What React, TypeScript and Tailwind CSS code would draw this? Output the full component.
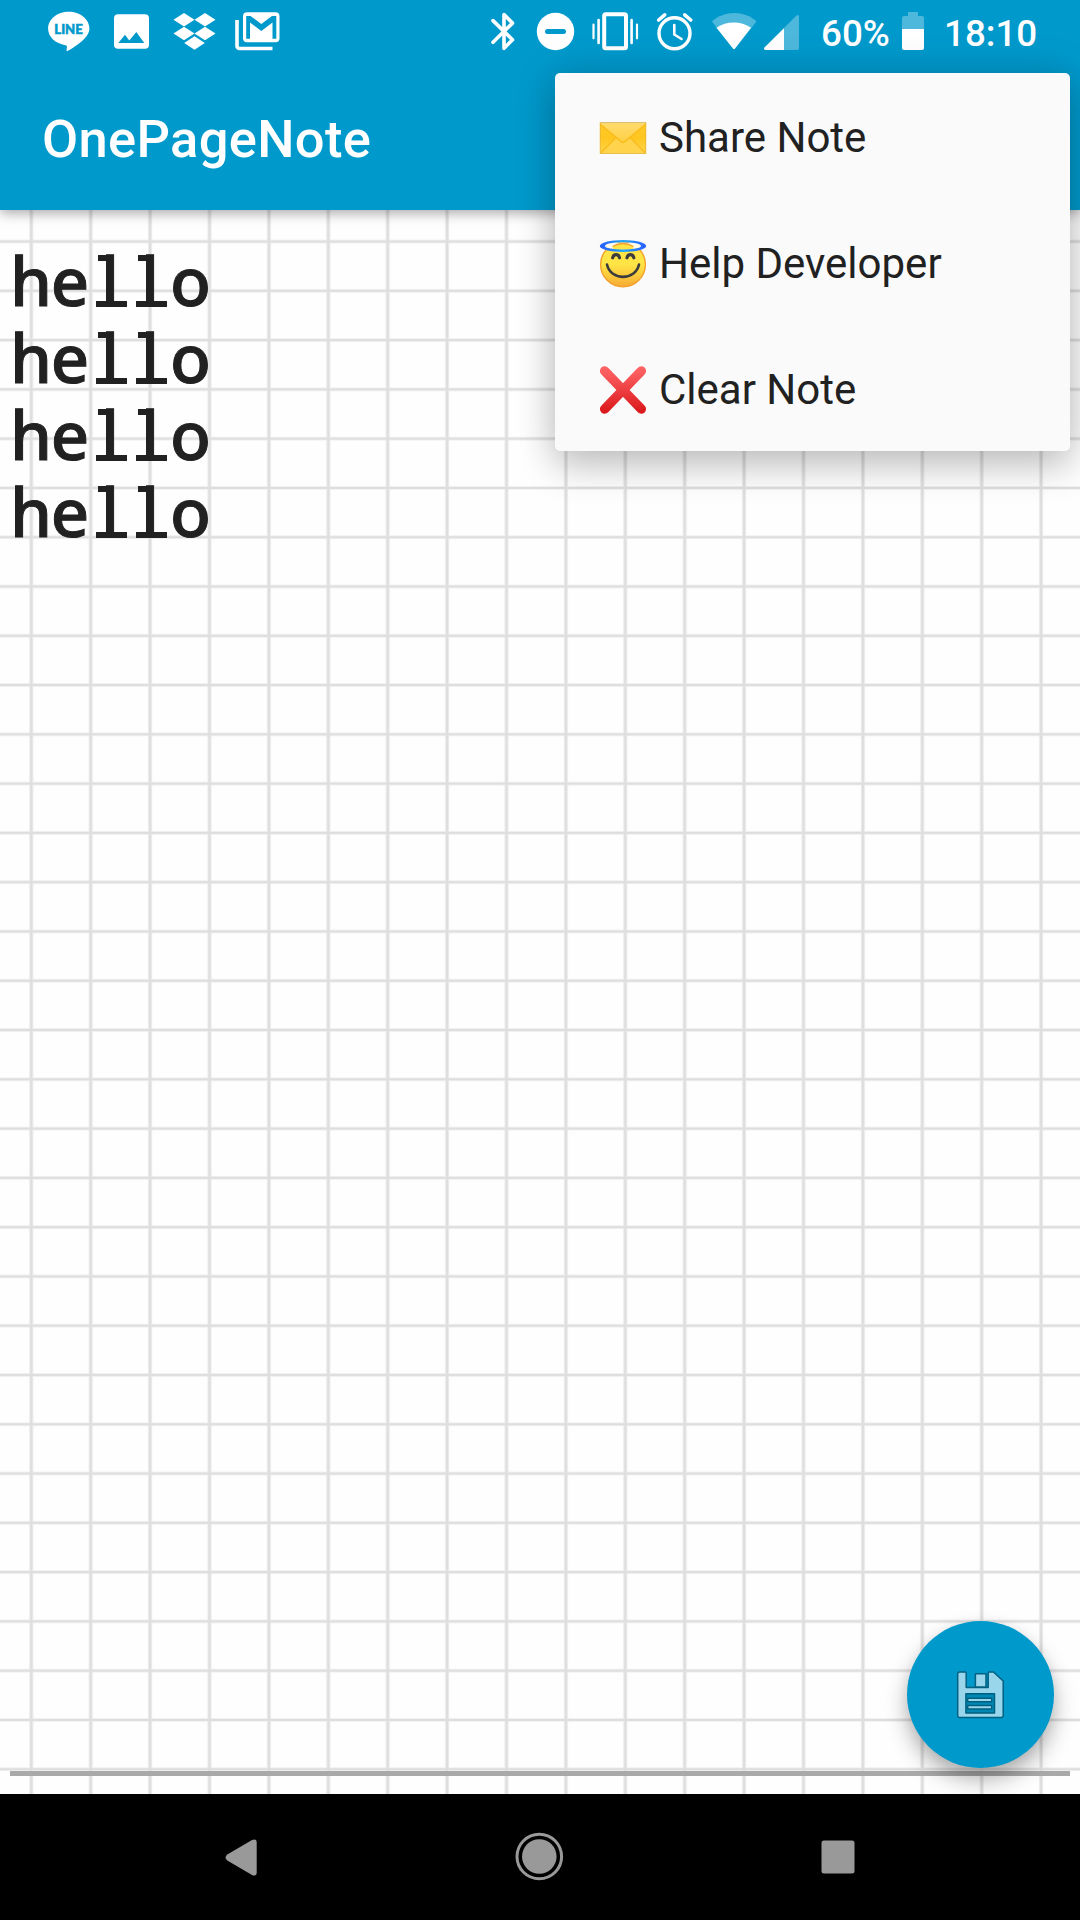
import type { ReactNode } from "react";

const WHITE = "#ffffff";
const FADED = "#4db8dc";

function StatusIcon({ x, w, className, children }: { x: number; w: number; className: string; children: ReactNode }) {
  return (
    <svg viewBox={`${x} 0 ${w} 63`} className={className} fill={WHITE}>
      {children}
    </svg>
  );
}

function NotificationIcons() {
  return (
    <div className="flex h-full pl-11">
      <StatusIcon x={44} w={66} className="h-[63px] w-[66px]">
        <path d="M68.7 11.8c-11.3 0-20.6 7.5-20.6 16.8 0 8.3 7.4 15.200 17.300 16.600 2.300.5 1.400 2.200 1.200 5.500 0 .5.4.7.9.4 3-1.500 12.500-7.400 17.500-13.100 2.900-3 4.400-6 4.400-9.400 0-9.300-9.300-16.800-20.700-16.800z" />
        <text x="54.300" y="33.800" fontSize="12.300" fontWeight="900" fontFamily="Lato, sans-serif" fill="#0099cc" stroke="#0099cc" strokeWidth=".5" textLength="28.500" lengthAdjust="spacingAndGlyphs">
          LINE
        </text>
      </StatusIcon>
      <StatusIcon x={110} w={55} className="h-[63px] w-[55px]">
        <path fillRule="evenodd" d="M118 14.300h27a4 4 0 0 1 4 4v26.400a4 4 0 0 1-4 4h-27a4 4 0 0 1-4-4V18.300a4 4 0 0 1 4-4zM118.300 43h26L136.300 32l-7 8.500-4.300-5.700z" />
      </StatusIcon>
      <StatusIcon x={165} w={60} className="h-[63px] w-[60px]">
        <path d="M184 13l10.500 6.800L184 26.500 173.500 19.800zM205 13l10.500 6.800L205 26.500l-10.500-6.700zM184 26.800l10.500 6.700L184 40.200l-10.500-6.700zM205 26.800l10.500 6.700-10.500 6.700-10.500-6.700zM194.500 36.200l10.300 6.700-10.300 6.800-10.300-6.800z" />
      </StatusIcon>
      <StatusIcon x={225} w={65} className="h-[63px] w-[65px]">
        <path fillRule="evenodd" d="M247 12.300h28.500a4 4 0 0 1 4 4v22a4 4 0 0 1-4 4H247a4 4 0 0 1-4-4v-22a4 4 0 0 1 4-4zM246.200 38.800h3.800V22.600l11.300 8.400 11.200-8.400v16.200h3.800V16h-4.300l-10.700 8-10.800-8h-4.300z" />
        <path d="M237 20v26a2.500 2.500 0 0 0 2.500 2.500H272.500" fill="none" stroke={WHITE} strokeWidth="3.600" />
      </StatusIcon>
    </div>
  );
}

function SystemIcons() {
  return (
    <div className="flex h-full">
      <StatusIcon x={485} w={45} className="h-[63px] w-[45px]">
        <path d="M493 20.600l19.500 19.200-8.500 8.500V14.600l8.500 8.500-19.500 19.200" fill="none" stroke={WHITE} strokeWidth="3.600" strokeLinecap="round" strokeLinejoin="round" />
      </StatusIcon>
      <StatusIcon x={530} w={55} className="h-[63px] w-[55px]">
        <circle cx="555.500" cy="31.500" r="18.700" />
        <path d="M547.500 31.500h16" stroke="#0099cc" strokeWidth="5" strokeLinecap="round" />
      </StatusIcon>
      <StatusIcon x={585} w={65} className="h-[63px] w-[65px]">
        <rect x="604.200" y="14.200" width="21.800" height="34.100" rx="1.500" fill="none" stroke={WHITE} strokeWidth="4" />
        <path d="M598.600 20v23M631.600 20v23" stroke={WHITE} strokeWidth="2.600" strokeLinecap="round" />
        <path d="M593.500 24.700v13.600M637 24.700v13.600" stroke={WHITE} strokeWidth="2.200" strokeLinecap="round" />
      </StatusIcon>
      <StatusIcon x={650} w={55} className="h-[63px] w-[55px]">
        <g fill="none" stroke={WHITE} strokeLinecap="round" strokeLinejoin="round">
          <circle cx="674.500" cy="33.300" r="15.500" strokeWidth="3.400" />
          <path d="M674.300 25v9.500l7.200 4.500" strokeWidth="2.600" />
          <path d="M658.700 20l6-5.200M690.700 20l-6-5.200" strokeWidth="3.600" />
        </g>
      </StatusIcon>
      <StatusIcon x={705} w={57} className="h-[63px] w-[57px]">
        <path d="M712 21.500C724 10 744.500 10 756.500 21.500L734.800 49q-.8.800-1.600 0z" fill={FADED} />
        <path d="M716.500 27.700c10-7 24.500-7 34.500 0L735 48.600q-1 1-2 0z" />
      </StatusIcon>
      <StatusIcon x={762} w={60} className="h-[63px] w-[60px]">
        <path d="M764.500 47.600L796.500 15.500q2.500-1.500 2.500 1V48q0 2-2 2H765.500q-2.500-.400-1-2.400z" fill={FADED} />
        <path d="M784 28.200V50H765.500q-2.500-.4-1-2.400z" />
      </StatusIcon>
      <span className="-ml-px w-[81px] pt-4 text-[36.750px] leading-[36px] font-medium">60%</span>
      <StatusIcon x={902} w={43} className="h-[63px] w-[43px]">
        <path d="M908 12h10v4h4a2 2 0 0 1 2 2v12h-22V18a2 2 0 0 1 2-2h4z" fill={FADED} />
        <path d="M902 29h22v19a2 2 0 0 1-2 2h-18a2 2 0 0 1-2-2z" />
      </StatusIcon>
      <span className="-ml-px w-[136px] pt-4 text-[36.750px] leading-[36px] font-medium">18:10</span>
    </div>
  );
}

function Envelope() {
  return (
    <svg viewBox="0 0 48 48" className="size-12">
      <defs>
        <linearGradient id="env" x1="0" y1="0" x2="0" y2="1">
          <stop offset="0" stopColor="#ffca28" />
          <stop offset=".5" stopColor="#ffc61f" />
          <stop offset="1" stopColor="#ffd54f" />
        </linearGradient>
        <linearGradient id="flap" x1="0" y1="0" x2="0" y2="1">
          <stop offset="0" stopColor="#ffdb6e" />
          <stop offset="1" stopColor="#ffd042" />
        </linearGradient>
      </defs>
      <rect x=".9" y="8.300" width="46.200" height="31.500" fill="url(#env)" />
      <path d="M1.500 39.200L16.500 24 23.800 29.800 31.500 24 46.500 39.200z" fill="#ffd44c" />
      <path d="M1.500 39L16.500 24M46.500 39L31.500 24" stroke="#fbbb1c" strokeWidth="1.200" />
      <path d="M1.200 9L24 28.500 46.800 9z" fill="url(#flap)" />
      <path d="M1.200 10.500L22.500 27.800q1.500 1.300 3 0L46.800 10.500" fill="none" stroke="#fbbb1c" strokeWidth="1.200" />
      <rect x="1.200" y="8.600" width="45.600" height="30.900" fill="none" stroke="#e2b33c" strokeWidth=".7" />
      <path d="M.9 8.600h46.200" stroke="#d9c17a" strokeWidth="1" />
    </svg>
  );
}

function HaloSmile() {
  return (
    <svg viewBox="0 0 48 48" className="size-12">
      <defs>
        <linearGradient id="face" x1="0" y1="0" x2="0" y2="1">
          <stop offset=".5" stopColor="#fee445" />
          <stop offset=".75" stopColor="#fbc93c" />
          <stop offset="1" stopColor="#f6a835" />
        </linearGradient>
        <linearGradient id="halo" x1="0" y1="0" x2="1" y2="0">
          <stop offset=".05" stopColor="#2962ff" />
          <stop offset=".5" stopColor="#21a9f3" />
          <stop offset=".95" stopColor="#2962ff" />
        </linearGradient>
      </defs>
      <circle cx="24" cy="24.500" r="22.400" fill="url(#face)" stroke="#f3a02c" strokeWidth="1.400" />
      <ellipse cx="24" cy="6" rx="20" ry="3.500" fill="#fffbe8" />
      <path d="M13.500 6.500q10.500-6 21 0l-1 3h-19z" fill="#fee445" />
      <path d="M13.500 6.500q10.500-6 21 0" fill="none" stroke="#f3a02c" strokeWidth="1.400" />
      <path fillRule="evenodd" fill="url(#halo)" d="M.8 6a23.200 6 0 0 1 46.400 0a23.200 6 0 0 1-46.400 0zM6 5.900a18 3.700 0 0 0 36 0a18 3.700 0 0 0-36 0z" />
      <g fill="none" stroke="#3c3c3c" strokeLinecap="round">
        <path d="M13.700 17.800c.8-4.300 6-4.300 6.800 0M28 17.800c.8-4.300 6-4.300 6.800 0" strokeWidth="3.200" />
        <path d="M8 24.500c3.500 16.500 28.500 16.500 32 0" strokeWidth="2.600" />
      </g>
    </svg>
  );
}

function RedCross() {
  return (
    <svg viewBox="0 0 48 48" className="size-12">
      <defs>
        <linearGradient id="cross" gradientUnits="userSpaceOnUse" x1="0" y1="0" x2="0" y2="48">
          <stop offset="0" stopColor="#ff6464" />
          <stop offset=".15" stopColor="#fb5c5e" />
          <stop offset="1" stopColor="#d91518" />
        </linearGradient>
      </defs>
      <path d="M5.700 5L42.300 43M42.300 5L5.700 43" stroke="url(#cross)" strokeWidth="9.600" strokeLinecap="round" />
    </svg>
  );
}

function MenuItem({ icon, label }: { icon: ReactNode; label: string }) {
  return (
    <li className="flex h-[126px] items-center pt-[3px] pl-11">
      {icon}
      <span className="ml-3 pt-px text-[42px] leading-none text-[#212121]">{label}</span>
    </li>
  );
}

function OverflowMenu() {
  return (
    <ul className="absolute top-[73px] left-[555px] z-20 h-[378px] w-[515px] rounded-[5px] bg-[#fafafa] shadow-[0_18px_36px_rgba(0,0,0,0.17),0_0_40px_rgba(0,0,0,0.16)]">
      <MenuItem icon={<Envelope />} label="Share Note" />
      <MenuItem icon={<HaloSmile />} label="Help Developer" />
      <MenuItem icon={<RedCross />} label="Clear Note" />
    </ul>
  );
}

/* One monospaced cell; the narrow "l" carries slab serifs. */
function Cell({ char }: { char: string }) {
  if (char === "l") {
    return (
      <span className="relative inline-block w-10 text-center before:absolute before:top-[13px] before:left-2 before:h-1.5 before:w-3 before:bg-[#212121] after:absolute after:top-[59px] after:left-1.5 after:h-1.5 after:w-[30.500px] after:bg-[#212121]">
        l
      </span>
    );
  }
  return <span className="inline-block w-10 text-center">{char}</span>;
}

function Note() {
  const lines = ["hello", "hello", "hello", "hello"];
  return (
    <main className="relative h-[1584px] overflow-hidden bg-[#fefefe]">
      <svg className="absolute inset-0" width="1080" height="1584">
        <defs>
          <pattern id="grid" width="59.400" height="49.280" patternUnits="userSpaceOnUse" x="1.600" y="6.900">
            <path d="M29.700 0v50" stroke="#ececec" strokeWidth="4.200" />
            <path d="M0 24.640h60" stroke="#ececec" strokeWidth="3.600" />
            <path d="M29.700 0v50M0 24.640h60" stroke="#dedede" strokeWidth="2" />
          </pattern>
        </defs>
        <rect width="1080" height="1584" fill="url(#grid)" />
      </svg>
      <div className="relative flex h-full flex-col px-2.5 pt-8">
        <div className="grow font-['Noto_Sans',sans-serif] text-[67px] leading-[77px] font-medium text-[#212121] [-webkit-text-stroke:1px_#212121]">
          {lines.map((line, i) => (
            <p key={i} className="h-[77px]">
              {line.split("").map((c, j) => (
                <Cell key={j} char={c} />
              ))}
            </p>
          ))}
        </div>
        <div className="mb-[18px] h-[5px] bg-[#a9a9a9]" />
      </div>
      <button className="absolute right-[26px] bottom-[26px] flex size-[147px] items-center justify-center rounded-full bg-[#0099cc] shadow-[0_12px_22px_rgba(0,0,0,0.3),0_2px_12px_rgba(0,0,0,0.05)]">
        <svg viewBox="1.300 0 70 70" className="size-[70px]">
          <g fill="#99d6eb" stroke="#006080" strokeWidth="1.500" strokeLinejoin="round">
            <path fillRule="evenodd" d="M15 12h5.500q1 0 1 1v14.500h22V13q0-1 1-1h4.300L58.500 21v34.500q0 2-2 2H15q-2 0-2-2V14q0-2 2-2z" />
            <rect x="30.700" y="13.800" width="10.600" height="13.200" />
            <rect x="21.200" y="33.800" width="28.600" height="19.200" fill="#0088b5" />
            <rect x="23" y="38.300" width="24" height="3.400" />
            <rect x="23" y="45.500" width="24" height="3.400" />
          </g>
        </svg>
      </button>
    </main>
  );
}

function NavBar() {
  return (
    <nav className="flex h-[126px] items-center bg-black">
      <svg viewBox="0 0 1080 126" className="h-[126px] w-full" fill="#999999">
        <path d="M227.300 60.500L252 46q4.700-1.800 4.700 2.500v30q0 4.300-4.700 2.500L227.300 66.500q-3.500-3 0-6z" />
        <circle cx="539.300" cy="62.500" r="17.300" />
        <circle cx="539.300" cy="62.500" r="22.300" fill="none" stroke="#999999" strokeWidth="3" />
        <rect x="821.500" y="46.500" width="33" height="33" rx="2.500" />
      </svg>
    </nav>
  );
}

export default function App() {
  return (
    <div className="relative h-[1920px] w-[1080px] overflow-hidden font-[Roboto,sans-serif]">
      <header className="relative z-10 h-[210px] bg-[#0099cc] text-white shadow-[0_3px_12px_rgba(0,0,0,0.35)]">
        <div className="flex h-[63px] justify-between">
          <NotificationIcons />
          <SystemIcons />
        </div>
        <h1 className="flex h-[147px] items-center pt-[5px] pl-[42px] text-[52.500px] leading-none font-medium tracking-[0.33px]">OnePageNote</h1>
      </header>
      <OverflowMenu />
      <Note />
      <NavBar />
    </div>
  );
}
